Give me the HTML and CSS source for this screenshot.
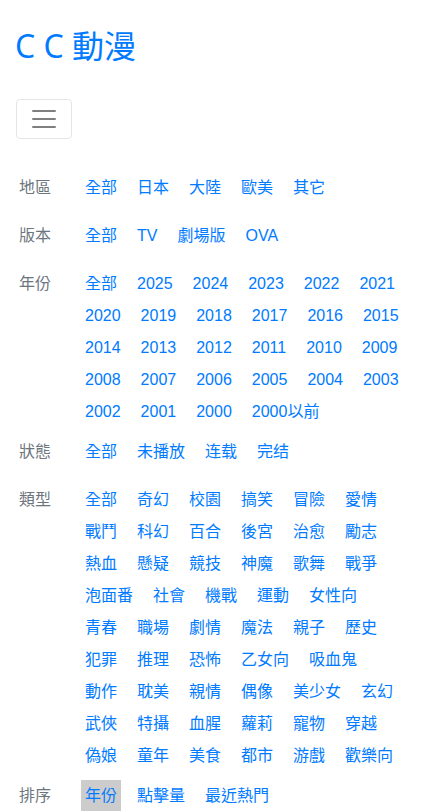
FILE: index.html
```html
<!DOCTYPE html>
<html lang="zh-Hant">
<head>
<meta charset="utf-8">
<title>C C 動漫</title>
<link rel="stylesheet" href="styles.css">
</head>
<body>
<div class="page">
  <h1 class="brand"><a href="#">C C 動漫</a></h1>
  <button class="toggler" type="button" aria-label="menu">
    <svg class="toggler-icon" viewBox="0 0 30 30" width="30" height="30"><path d="M4 7h22M4 15h22M4 23h22" stroke="rgba(0,0,0,0.5)" stroke-width="2" stroke-linecap="round" fill="none"/></svg>
  </button>
  <div class="filters">
    <div class="group">
      <div class="label">地區</div>
      <div class="items">
        <a href="#">全部</a><a href="#">日本</a><a href="#">大陸</a><a href="#">歐美</a><a href="#">其它</a>
      </div>
    </div>
    <div class="group">
      <div class="label">版本</div>
      <div class="items">
        <a href="#">全部</a><a href="#">TV</a><a href="#">劇場版</a><a href="#">OVA</a>
      </div>
    </div>
    <div class="group">
      <div class="label">年份</div>
      <div class="items">
        <a href="#">全部</a><a href="#">2025</a><a href="#">2024</a><a href="#">2023</a><a href="#">2022</a><a href="#">2021</a><a href="#">2020</a><a href="#">2019</a><a href="#">2018</a><a href="#">2017</a><a href="#">2016</a><a href="#">2015</a><a href="#">2014</a><a href="#">2013</a><a href="#">2012</a><a href="#">2011</a><a href="#">2010</a><a href="#">2009</a><a href="#">2008</a><a href="#">2007</a><a href="#">2006</a><a href="#">2005</a><a href="#">2004</a><a href="#">2003</a><a href="#">2002</a><a href="#">2001</a><a href="#">2000</a><a href="#">2000以前</a>
      </div>
    </div>
    <div class="group">
      <div class="label">狀態</div>
      <div class="items">
        <a href="#">全部</a><a href="#">未播放</a><a href="#">连载</a><a href="#">完结</a>
      </div>
    </div>
    <div class="group">
      <div class="label">類型</div>
      <div class="items">
        <a href="#">全部</a><a href="#">奇幻</a><a href="#">校園</a><a href="#">搞笑</a><a href="#">冒險</a><a href="#">愛情</a><a href="#">戰鬥</a><a href="#">科幻</a><a href="#">百合</a><a href="#">後宮</a><a href="#">治愈</a><a href="#">勵志</a><a href="#">熱血</a><a href="#">懸疑</a><a href="#">競技</a><a href="#">神魔</a><a href="#">歌舞</a><a href="#">戰爭</a><a href="#">泡面番</a><a href="#">社會</a><a href="#">機戰</a><a href="#">運動</a><a href="#">女性向</a><a href="#">青春</a><a href="#">職場</a><a href="#">劇情</a><a href="#">魔法</a><a href="#">親子</a><a href="#">歷史</a><a href="#">犯罪</a><a href="#">推理</a><a href="#">恐怖</a><a href="#">乙女向</a><a href="#">吸血鬼</a><a href="#">動作</a><a href="#">耽美</a><a href="#">親情</a><a href="#">偶像</a><a href="#">美少女</a><a href="#">玄幻</a><a href="#">武俠</a><a href="#">特攝</a><a href="#">血腥</a><a href="#">蘿莉</a><a href="#">寵物</a><a href="#">穿越</a><a href="#">偽娘</a><a href="#">童年</a><a href="#">美食</a><a href="#">都市</a><a href="#">游戲</a><a href="#">歡樂向</a>
      </div>
    </div>
    <div class="group">
      <div class="label">排序</div>
      <div class="items">
        <a href="#" class="active">年份</a><a href="#">點擊量</a><a href="#">最近熱門</a>
      </div>
    </div>
  </div>
</div>
</body>
</html>
```

FILE: styles.css
```css
html, body {
  margin: 0;
  padding: 0;
  background: #fff;
}
body {
  font-family: "Liberation Sans", "Noto Sans CJK TC", sans-serif;
  font-size: 16px;
  color: #212529;
}
.page {
  padding: 0 16px;
}
.brand {
  margin: 26px 0 0 -1px;
  font-family: "Noto Sans", "Noto Sans CJK TC", sans-serif;
  font-size: 32px;
  font-weight: 400;
  line-height: 40px;
}
.brand a {
  color: #007bff;
  text-decoration: none;
}
.toggler {
  display: block;
  margin-top: 33px;
  width: 56px;
  height: 40px;
  padding: 4px 12px;
  border: 1px solid rgba(0, 0, 0, 0.1);
  border-radius: 4px;
  background: transparent;
  box-sizing: border-box;
}
.toggler-icon {
  display: block;
  width: 30px;
  height: 30px;
}
.filters {
  margin-top: 33px;
}
.group {
  display: flex;
  min-height: 40px;
  margin-bottom: 8px;
  line-height: 32px;
}
.label {
  flex: 0 0 65px;
  box-sizing: border-box;
  padding-left: 3px;
  color: #6c757d;
}
.items {
  flex: 1;
  display: flex;
  flex-wrap: wrap;
  column-gap: 12px;
}
.items a {
  padding: 0 4px;
  color: #007bff;
  text-decoration: none;
  white-space: nowrap;
}
.items a.active {
  background: #ccc;
}
```
